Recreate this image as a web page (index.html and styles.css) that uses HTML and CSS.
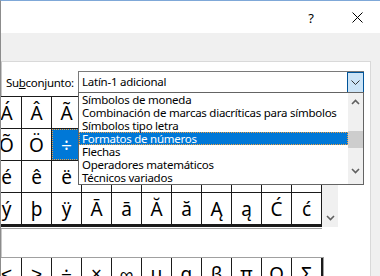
FILE: index.html
```html
<!DOCTYPE html>
<html>
  <head>
    <meta charset="utf-8">
    <title>Símbolo</title>
    <link rel="stylesheet" href="styles.css">
  </head>
  <body>
    <div class="ventana">
      <header class="titulo">
        <span class="btn-titulo ayuda">?</span>
        <span class="btn-titulo cerrar">
          <svg width="11" height="11" viewBox="0 0 11 11"><path d="M0.5 0.5L10.5 10.5M10.5 0.5L0.5 10.5" stroke="#000" stroke-width="1" fill="none"/></svg>
        </span>
      </header>
      <div class="pestanas"></div>
      <div class="cuerpo">
        <main class="panel">
          <div class="subconjunto">
            <label class="etiqueta">Su<u>b</u>conjunto:</label>
            <div class="combo">
              <span class="combo-valor">Latín-1 adicional</span>
              <span class="combo-btn">
                <svg width="9" height="5" viewBox="0 0 9 5"><path d="M0.5 0.5L4.5 4.5L8.5 0.5" stroke="#333" stroke-width="1" fill="none"/></svg>
              </span>
              <div class="lista">
                <ul class="opciones">
                  <li>Símbolos de moneda</li>
                  <li>Combinación de marcas diacríticas para símbolos</li>
                  <li>Símbolos tipo letra</li>
                  <li class="activa">Formatos de números</li>
                  <li>Flechas</li>
                  <li>Operadores matemáticos</li>
                  <li>Técnicos variados</li>
                </ul>
                <div class="barra">
                  <svg class="flecha" width="9" height="6" viewBox="0 0 9 6"><path d="M1 5L4.5 1.5L8 5" stroke="#606060" stroke-width="1.6" fill="none"/></svg>
                  <div class="pulgar"></div>
                  <svg class="flecha abajo" width="9" height="6" viewBox="0 0 9 6"><path d="M1 1L4.5 4.5L8 1" stroke="#606060" stroke-width="1.6" fill="none"/></svg>
                </div>
              </div>
            </div>
          </div>

          <div class="caracteres">
            <div class="tabla">
              <span>Á</span><span>Â</span><span>Ã</span><span>Ä</span><span>Å</span><span>Æ</span><span>Ç</span><span>È</span><span>É</span><span>Ê</span><span>Ë</span>
              <span>Õ</span><span>Ö</span><span class="elegido">÷</span><span>Ø</span><span>Ù</span><span>Ú</span><span>Û</span><span>Ü</span><span>Ý</span><span>Þ</span><span>ß</span>
              <span>é</span><span>ê</span><span>ë</span><span>ì</span><span>í</span><span>î</span><span>ï</span><span>ð</span><span>ñ</span><span>ò</span><span>ó</span>
              <span>ý</span><span>þ</span><span>ÿ</span><span>Ā</span><span>ā</span><span>Ă</span><span>ă</span><span>Ą</span><span>ą</span><span>Ć</span><span>ć</span>
            </div>
            <div class="desplaza">
              <svg width="9" height="6" viewBox="0 0 9 6"><path d="M1 1L4.5 4.5L8 1" stroke="#606060" stroke-width="1.6" fill="none"/></svg>
            </div>
          </div>

          <div class="recientes">
            <div class="tabla tabla-reciente">
              <span>≤</span><span>≥</span><span>÷</span><span>×</span><span>∞</span><span>µ</span><span>α</span><span>β</span><span>π</span><span>Ω</span><span>Σ</span>
            </div>
          </div>
        </main>
        <div class="lateral"></div>
      </div>
    </div>
  </body>
</html>
```

FILE: styles.css
```css
body {
  margin: 0;
  font-family: "Noto Sans", sans-serif;
  font-size: 11.5px;
  letter-spacing: -0.25px;
  color: #000;
  overflow: hidden;
}

.ventana {
  width: 380px;
  height: 276px;
  overflow: hidden;
  border-top: 1px solid #7fa8d8;
  border-left: 1px solid #8c8c8c;
  box-sizing: border-box;
  background-color: #f0f0f0;
}

.titulo {
  height: 32px;
  background-color: white;
  display: flex;
  justify-content: flex-end;
}

.btn-titulo {
  width: 46px;
  display: flex;
  align-items: center;
  justify-content: center;
}

.ayuda {
  font-size: 13px;
  padding-top: 1px;
}

.pestanas {
  height: 28px;
  background-color: #f0f0f0;
}

.cuerpo {
  display: flex;
}

.panel {
  width: 370px;
  height: 220px;
  background-color: white;
  border-top: 1px solid #d9d9d9;
  border-left: 1px solid #c8c8c8;
  border-right: 1px solid #d9d9d9;
  box-sizing: border-box;
}

.subconjunto {
  display: flex;
  align-items: center;
  padding-top: 9px;
}

.etiqueta {
  width: 72px;
  padding-left: 4px;
  flex-shrink: 0;
  letter-spacing: -0.3px;
  white-space: nowrap;
}

.combo {
  position: relative;
  display: flex;
  width: 286px;
  height: 22px;
  border: 1px solid #7a7a7a;
  box-sizing: border-box;
}

.combo-valor {
  flex: 1;
  padding-left: 3px;
  line-height: 19px;
}

.combo-btn {
  width: 17px;
  margin: 0 -1px -1px 0;
  border: 1px solid #005499;
  background-color: #cce4f7;
  box-sizing: border-box;
  display: flex;
  align-items: center;
  justify-content: center;
}

.lista {
  position: absolute;
  left: -1px;
  top: 20px;
  width: 286px;
  height: 93px;
  border: 1px solid #646464;
  box-sizing: border-box;
  background-color: white;
  display: flex;
  z-index: 2;
}

.opciones {
  list-style: none;
  margin: 0;
  padding: 0;
  flex: 1;
}

.opciones li {
  height: 13px;
  line-height: 13px;
  padding-left: 3px;
  white-space: nowrap;
  box-sizing: border-box;
}

.opciones .activa {
  background-color: #0078d7;
  color: white;
  outline: 1px dotted #f0a040;
  outline-offset: -1px;
}

.barra {
  width: 15px;
  background-color: #f0f0f0;
  display: flex;
  flex-direction: column;
  align-items: center;
}

.barra .flecha {
  margin-top: 6px;
}

.barra .abajo {
  margin-top: 20px;
}

.pulgar {
  width: 15px;
  height: 17px;
  margin-top: 26px;
  background-color: #cdcdcd;
}

.caracteres {
  display: flex;
  margin-top: 3px;
  margin-left: -11px;
}

.tabla {
  display: grid;
  grid-template-columns: repeat(11, 29px);
  grid-auto-rows: 31px;
  gap: 1px;
  padding: 1px;
  background-color: #1a1a1a;
  box-shadow: 0 1px 0 white, 0 2px 0 #a0a0a0;
  letter-spacing: 0;
}

.tabla span {
  background-color: white;
  display: flex;
  align-items: center;
  justify-content: center;
  font-size: 19px;
}

.tabla .elegido {
  background-color: #0078d7;
  color: white;
  outline: 1px dotted #f0a040;
  outline-offset: -1px;
}

.desplaza {
  width: 16px;
  height: 131px;
  background-color: #f0f0f0;
  display: flex;
  align-items: flex-end;
  justify-content: center;
  padding-bottom: 6px;
  box-sizing: border-box;
}

.recientes {
  margin-top: 30px;
  margin-left: -11px;
}

.tabla-reciente {
  width: max-content;
  padding-right: 2px;
  border-top: 1px solid #a0a0a0;
  border-right: 1px solid #a0a0a0;
  padding-top: 0;
  box-shadow: none;
}

.lateral {
  flex: 1;
  background-color: #f0f0f0;
}
```
